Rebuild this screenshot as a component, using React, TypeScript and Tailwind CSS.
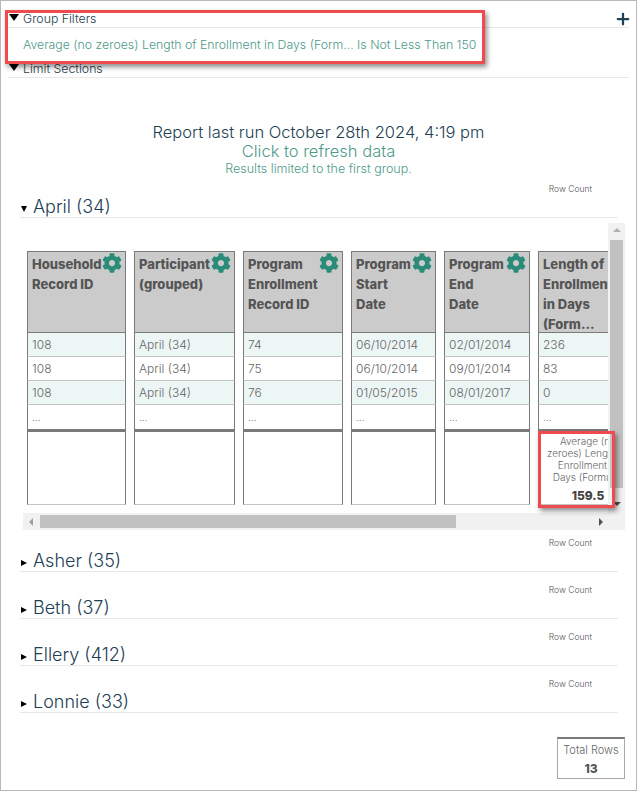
import React from 'react';
import { FaCog } from 'react-icons/fa';
import { Plus } from 'lucide-react';

const columns = [
  { width: 'w-[99px]', head: ['Household', 'Record ID'], gear: true, cells: ['108', '108', '108'], foot: false },
  { width: 'w-[101px]', head: ['Participant', '(grouped)'], gear: true, cells: ['April (34)', 'April (34)', 'April (34)'], foot: false },
  { width: 'w-[100px]', head: ['Program', 'Enrollment', 'Record ID'], gear: true, cells: ['74', '75', '76'], foot: false },
  { width: 'w-[85px]', head: ['Program', 'Start', 'Date'], gear: true, cells: ['06/10/2014', '06/10/2014', '01/05/2015'], foot: false },
  { width: 'w-[86px]', head: ['Program', 'End', 'Date'], gear: true, cells: ['02/01/2014', '09/01/2014', '08/01/2017'], foot: false },
  { width: 'w-[100px]', head: ['Length of', 'Enrollment', 'in Days', '(Form...'], gear: false, cells: ['236', '83', '0'], foot: true },
];

const collapsedGroups = ['Asher (35)', 'Beth (37)', 'Ellery (412)', 'Lonnie (33)'];

function Caret({ open }: { open: boolean }) {
  if (open) {
    return <span className="h-0 w-0 border-x-[3.5px] border-t-[6px] border-x-transparent border-t-black" />;
  }
  return <span className="h-0 w-0 border-y-[3.5px] border-l-[6px] border-y-transparent border-l-black" />;
}

function FilterHeading({ label }: { label: string }) {
  return (
    <div className="flex h-[17px] items-center border-b border-[#e8e8e8]">
      <span className="ml-[1px] h-0 w-0 -translate-y-[2px] border-x-[5px] border-t-[7px] border-x-transparent border-t-black" />
      <span className="ml-[4px] text-[12.3px] text-[#1f3d4d]">{label}</span>
    </div>
  );
}

function GroupHeading({ name, open }: { name: string; open: boolean }) {
  return (
    <div>
      <div className="flex h-[13px] items-center justify-end pr-[26px] text-[8.5px] text-[#555]">Row Count</div>
      <div className="flex h-[22px] items-center border-b border-[#e8e8e8] pl-[1px]">
        <span className="flex w-[12px] translate-y-[2px] items-center">
          <Caret open={open} />
        </span>
        <span className="text-[18px] leading-none text-[#1d4054]">{name}</span>
      </div>
    </div>
  );
}

function Column({ col }: { col: (typeof columns)[number] }) {
  return (
    <div className={`${col.width} shrink-0`}>
      <div className="relative h-[82px] border border-[#7a7a7a] bg-[#cbcbcb] pl-[4px] pt-[2px] text-[13px] leading-[20px] font-extrabold text-[#555]">
        {col.head.map((line) => (
          <div key={line} className="whitespace-nowrap">{line}</div>
        ))}
        {col.gear && <FaCog className="absolute top-[1px] right-[3px] text-[20px] text-[#2a8c78]" />}
      </div>
      {col.cells.map((cell, i) => (
        <div
          key={i}
          className={`flex h-[24px] items-center border-x border-b border-x-[#7a7a7a] border-b-[#c4c4c4] pl-[4px] text-[12px] text-[#666] ${i % 2 === 0 ? 'bg-[#ecf6f5]' : 'bg-white'}`}
        >
          {cell}
        </div>
      ))}
      <div className="flex h-[24px] items-center border-x border-x-[#7a7a7a] pl-[4px] text-[10px] text-[#666]">...</div>
      <div className="h-[76px] border-x border-t-[3px] border-b border-x-[#7a7a7a] border-t-[#7a7a7a] border-b-[#c4c4c4] pt-[3px] text-center text-[10px] leading-[12px] text-[#666]">
        {col.foot && (
          <>
            <div>Average (no</div>
            <div className="whitespace-nowrap">zeroes) Length of</div>
            <div>Enrollment in</div>
            <div className="whitespace-nowrap">Days (Formula)</div>
            <div className="mt-[7px] text-[12px] font-extrabold text-[#444]">159.5</div>
          </>
        )}
      </div>
    </div>
  );
}

export default function App() {
  return (
    <div className="relative h-[791px] w-[637px] overflow-hidden border border-[#b8b8b8] bg-white font-['Inter',sans-serif] font-light">
      <div className="mx-[7px] pt-[10px]">
        <FilterHeading label="Group Filters" />
        <div className="flex h-[33px] items-center pl-[15px] pt-[2px] text-[12.3px] text-[#4e9a8a]">
          Average (no zeroes) Length of Enrollment in Days (Form... Is Not Less Than 150
        </div>
        <FilterHeading label="Limit Sections" />
      </div>

      <Plus className="absolute top-[9px] right-[4px] text-[#1d4054]" size={18} strokeWidth={3} />

      <div className="mt-[45px] text-center">
        <div className="text-[16.5px] leading-[19px] text-[#1d4054]">Report last run October 28th 2024, 4:19 pm</div>
        <div className="text-[16.5px] leading-[19px] text-[#4e9a8a]">Click to refresh data</div>
        <div className="text-[12.5px] leading-[16px] text-[#4e9a8a]">Results limited to the first group.</div>
      </div>

      <div className="ml-[19px] mr-[18px] mt-[6px]">
        <GroupHeading name="April (34)" open />
      </div>

      <div className="ml-[22px] mt-[5px] w-[602px]">
        <div className="flex">
          <div className="flex w-[585px] gap-[8px] overflow-hidden pb-[8px] pl-[4px] pt-[28px]">
            {columns.map((col) => (
              <Column key={col.head.join()} col={col} />
            ))}
          </div>
          <div className="relative flex w-[17px] flex-col items-center bg-[#f1f1f1]">
            <span className="mt-[5px] h-0 w-0 border-x-[4px] border-b-[4px] border-x-transparent border-b-[#b0b0b0]" />
            <span className="mt-[8px] h-[248px] w-[13px] bg-[#c1c1c1]" />
            <span className="mt-[14px] h-0 w-0 border-x-[4px] border-t-[4px] border-x-transparent border-t-[#505050]" />
          </div>
        </div>
        <div className="flex h-[17px] items-center bg-[#f1f1f1]">
          <span className="ml-[6px] h-0 w-0 border-y-[4px] border-r-[4px] border-y-transparent border-r-[#a0a0a0]" />
          <span className="ml-[7px] h-[13px] w-[416px] bg-[#c1c1c1]" />
          <span className="ml-[143px] h-0 w-0 border-y-[4px] border-l-[4px] border-y-transparent border-l-[#505050]" />
        </div>
      </div>

      <div className="ml-[19px] mr-[18px] mt-[7px] flex flex-col gap-[12px]">
        {collapsedGroups.map((name) => (
          <GroupHeading key={name} name={name} open={false} />
        ))}
      </div>

      <div className="ml-auto mr-[11px] mt-[24px] flex h-[42px] w-[68px] flex-col items-center border border-t-[2px] border-[#a8a8a8] border-t-[#7a7a7a]">
        <div className="mt-[3px] text-[11px] leading-[16px] text-[#666]">Total Rows</div>
        <div className="mt-[3px] text-[12px] leading-[16px] font-extrabold text-[#555]">13</div>
      </div>

      <div className="absolute top-[9px] left-[4px] h-[54px] w-[480px] border-[3px] border-[#ef4b4f] shadow-[2px_3px_5px_rgba(0,0,0,0.45)]" />
      <div className="absolute top-[430px] left-[537px] h-[77px] w-[77px] border-[3px] border-[#ef4b4f] shadow-[2px_3px_5px_rgba(0,0,0,0.45)]" />
    </div>
  );
}
